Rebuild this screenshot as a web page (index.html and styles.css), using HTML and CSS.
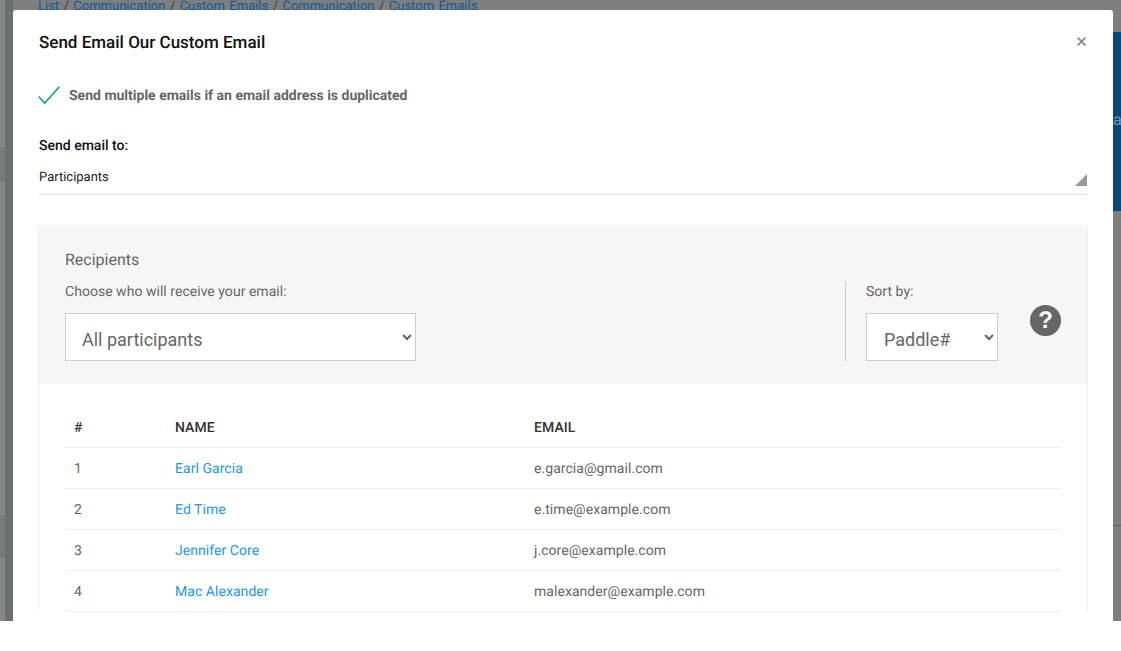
FILE: index.html
```html
<!DOCTYPE html>
<html lang="en">
<head>
  <meta charset="UTF-8">
  <title>Send Email</title>
  <meta name="viewport" content="width=device-width, initial-scale=1">
  <link rel="stylesheet" href="styles.css">
</head>
<body>

<div class="screen">
  <!-- page behind the overlay -->
  <div class="crumbs">
    <a>List</a> / <a>Communication</a> / <a>Custom Emails</a> / <a>Communication</a> / <a>Custom Emails</a>
  </div>
  <div class="side-banner">a</div>

  <div class="modal">
    <div class="modal-head">
      <h2>Send Email Our Custom Email</h2>
      <span class="close">×</span>
    </div>

    <div class="check-row">
      <svg class="check" width="22" height="19" viewBox="0 0 22 19">
        <path d="M0.7 10.5 L6.7 17.2 L21.3 0.8" fill="none" stroke="#009688" stroke-width="1.4"/>
      </svg>
      <span class="check-text">Send multiple emails if an email address is duplicated</span>
    </div>

    <div class="send-label">Send email to:</div>
    <div class="send-value">
      Participants
      <span class="resize-corner"></span>
    </div>

    <div class="recipients">
      <div class="filters">
        <div class="filter-main">
          <div class="recipients-title">Recipients</div>
          <label class="filter-label">Choose who will receive your email:</label>
          <select class="pick pick-wide">
            <option>All participants</option>
          </select>
        </div>
        <div class="filter-sort">
          <label class="filter-label">Sort by:</label>
          <select class="pick pick-small">
            <option>Paddle#</option>
          </select>
        </div>
        <div class="help">?</div>
      </div>

      <div class="table-wrap">
        <table>
          <colgroup>
            <col class="col-num">
            <col class="col-name">
            <col>
          </colgroup>
          <thead>
            <tr><th>#</th><th>NAME</th><th>EMAIL</th></tr>
          </thead>
          <tbody>
            <tr><td>1</td><td><a>Earl Garcia</a></td><td>e.garcia@gmail.com</td></tr>
            <tr><td>2</td><td><a>Ed Time</a></td><td>e.time@example.com</td></tr>
            <tr><td>3</td><td><a>Jennifer Core</a></td><td>j.core@example.com</td></tr>
            <tr><td>4</td><td><a>Mac Alexander</a></td><td>malexander@example.com</td></tr>
          </tbody>
        </table>
      </div>
    </div>
  </div>
</div>

</body>
</html>
```

FILE: styles.css
```css
html, body {
  margin: 0;
  padding: 0;
  background-color: #fff;
}
body {
  font-family: Roboto, 'Liberation Sans', sans-serif;
  font-size: 14px;
  color: #666;
  height: 651px;
  overflow: hidden;
  text-rendering: geometricPrecision;
}
.screen {
  position: relative;
  height: 621px;
  box-sizing: border-box;
  padding: 10px 8px 0 13px;
  overflow: hidden;
  background:
    linear-gradient(to bottom,
      transparent 147px, #7a7a7a 147px, #7a7a7a 182px, transparent 182px,
      transparent 515px, #7a7a7a 515px, #7a7a7a 558px, transparent 558px) 0 0 / 5px 621px no-repeat,
    linear-gradient(to bottom,
      transparent 525px, #5f5f5f 525px, #5f5f5f 526px, transparent 526px) 100% 0 / 8px 621px no-repeat,
    linear-gradient(to right, #868686 0, #868686 5px, #6c706d 5px, #6c706d 13px, #7e7e7e 13px);
}
.crumbs {
  position: absolute;
  left: 38px;
  top: -1px;
  font-size: 13px;
  line-height: 16px;
  color: #2c3e50;
  white-space: nowrap;
  word-spacing: 1.2px;
}
.crumbs a {
  color: #0f5a94;
}
.side-banner {
  position: absolute;
  right: 0;
  top: 32px;
  width: 8px;
  height: 179px;
  background-color: #054a7c;
  color: #7d94a8;
  font-size: 16px;
  line-height: 176px;
  overflow: hidden;
}
.modal {
  position: relative;
  height: 611px;
  box-sizing: border-box;
  padding: 0 26px;
  background-color: #fff;
  border-radius: 3px 3px 0 0;
  overflow: hidden;
}
.modal-head {
  display: flex;
  justify-content: space-between;
  align-items: center;
  height: 64px;
}
.modal-head h2 {
  margin: 2px 0 0;
  font-size: 17px;
  font-weight: 500;
  color: #111;
}
.close {
  font-size: 20px;
  line-height: 20px;
  color: #888;
  margin-bottom: 2px;
}
.check-row {
  display: flex;
  align-items: center;
  gap: 9px;
  height: 20px;
  margin: 11px 0 0 -1px;
  font-weight: 700;
  color: #666;
}
.check-text {
  padding-top: 2px;
}
.send-label {
  margin-top: 32px;
  line-height: 18px;
  font-weight: 500;
  color: #111;
}
.send-value {
  position: relative;
  margin-top: 5px;
  height: 34px;
  line-height: 35px;
  font-size: 13px;
  color: #222;
  border-bottom: 1px solid #ddd;
}
.resize-corner {
  position: absolute;
  right: 0;
  bottom: 8px;
  width: 0;
  height: 0;
  border-left: 12px solid transparent;
  border-bottom: 12px solid #999;
}
.recipients {
  margin: 30px -1px 0;
  border: 1px solid #eee;
  border-width: 0 1px;
}
.filters {
  display: flex;
  align-items: flex-start;
  height: 159px;
  box-sizing: border-box;
  padding: 24px 26px 0 26px;
  background-color: #f6f6f6;
}
.filter-main {
  flex: 1;
}
.recipients-title {
  font-size: 16px;
  line-height: 20px;
  margin-bottom: 11px;
  padding-top: 1px;
}
.filter-label {
  display: block;
  line-height: 22px;
  height: 21px;
  letter-spacing: 0.03px;
}
.pick {
  display: block;
  height: 48px;
  margin-top: 11px;
  padding: 5px 0 0 12px;
  font-family: Roboto, sans-serif;
  font-size: 18px;
  color: #666;
  background-color: #fff;
  border: 1px solid #ccc;
  border-radius: 0;
}
.pick-wide {
  width: 351px;
}
.pick-small {
  width: 132px;
  padding-left: 13px;
}
.filter-sort {
  margin-top: 32px;
  height: 80px;
  padding-left: 20px;
  border-left: 1px solid #ccc;
}
.help {
  width: 31px;
  height: 31px;
  margin: 56px 0 0 32px;
  border-radius: 50%;
  background-color: #666;
  color: #fff;
  font-family: 'Liberation Sans', sans-serif;
  font-size: 24px;
  font-weight: 700;
  line-height: 31px;
  text-align: center;
}
.table-wrap {
  padding: 22px 26px 0 26px;
}
table {
  width: 100%;
  border-collapse: collapse;
  table-layout: fixed;
  letter-spacing: 0.05px;
}
.col-num {
  width: 100px;
}
.col-name {
  width: 359px;
}
th {
  height: 39px;
  padding: 2px 10px 0;
  text-align: left;
  font-weight: 500;
  color: #333;
  border-bottom: 1px solid #eee;
}
th:first-child, td:first-child {
  padding-left: 9px;
}
td {
  height: 38px;
  padding: 2px 10px 0;
  border-bottom: 1px solid #eee;
}
td a {
  color: #2196f3;
}
```
